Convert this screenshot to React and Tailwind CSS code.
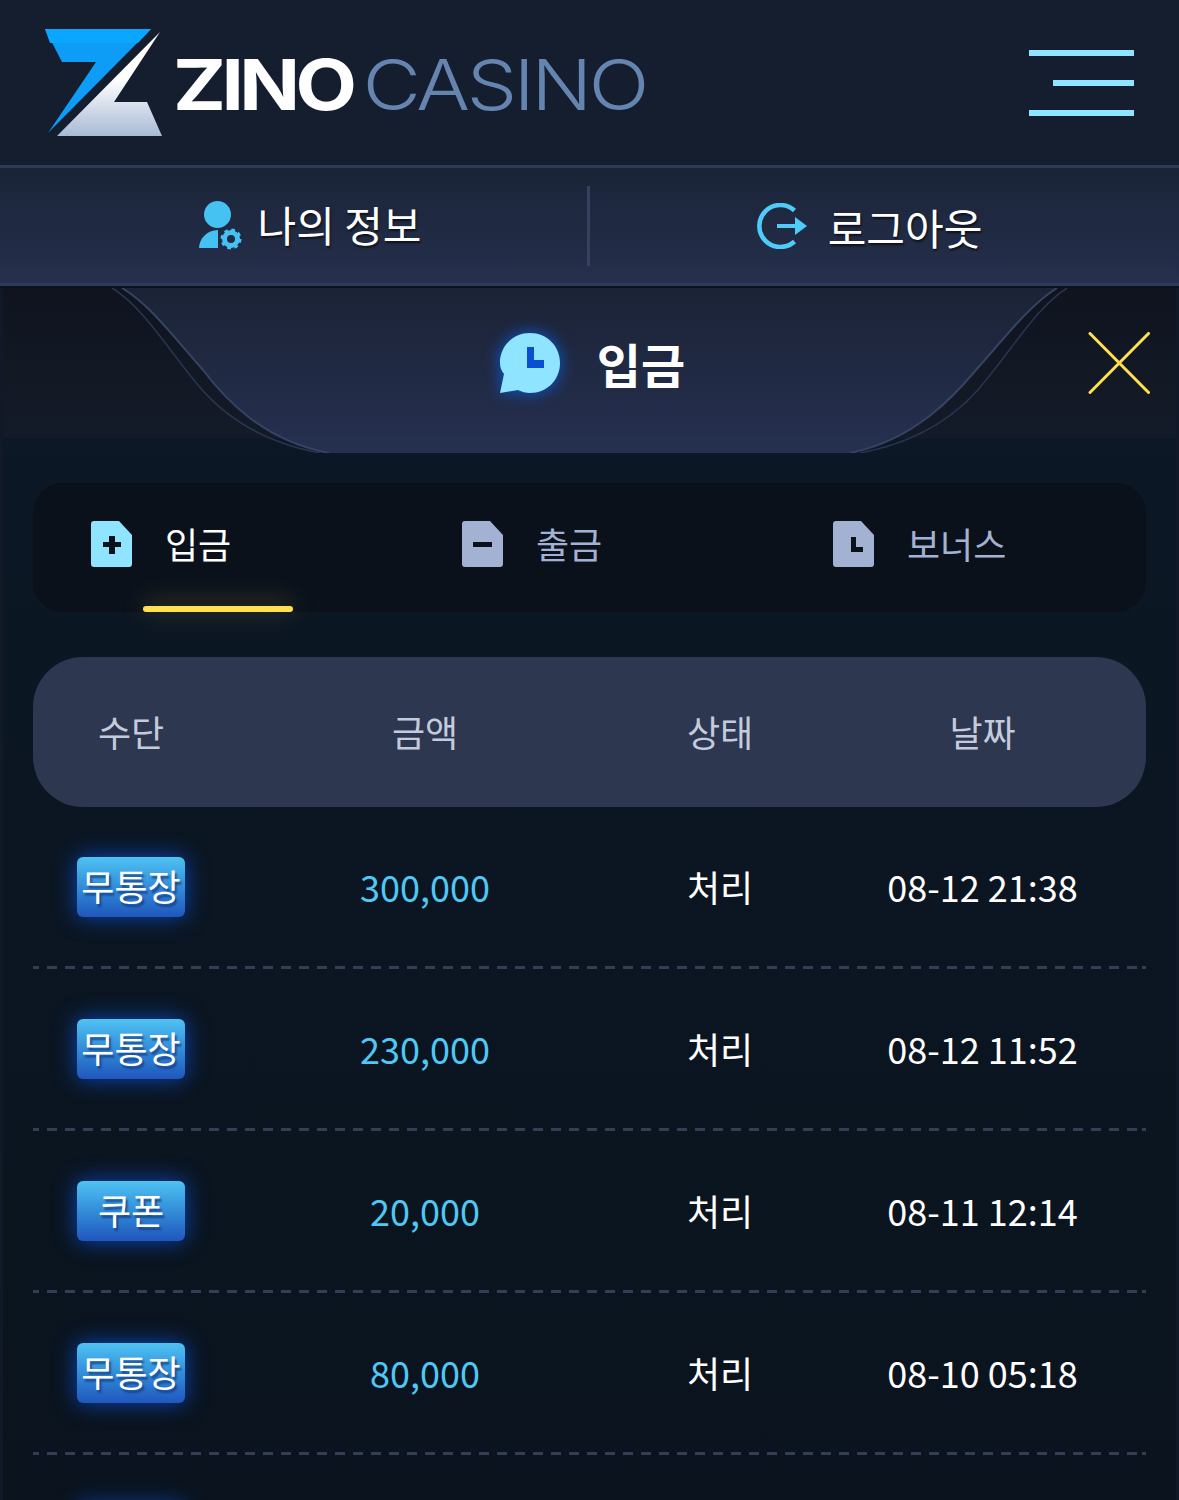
import React from "react";

const rows = [
  { kind: "무통장", amount: "300,000", state: "처리", date: "08-12 21:38" },
  { kind: "무통장", amount: "230,000", state: "처리", date: "08-12 11:52" },
  { kind: "쿠폰", amount: "20,000", state: "처리", date: "08-11 12:14" },
  { kind: "무통장", amount: "80,000", state: "처리", date: "08-10 05:18" },
];

const gridCols = "grid grid-cols-[196px_392px_198px_327px] items-center text-center";

function Logo() {
  return (
    <div className="flex items-center">
      <svg width="118" height="108" viewBox="45 29 118 108" className="shrink-0">
        <defs>
          <linearGradient id="zwhite" x1="0" y1="0" x2="0" y2="1">
            <stop offset="0.45" stopColor="#ffffff" />
            <stop offset="1" stopColor="#a8bad5" />
          </linearGradient>
        </defs>
        <polygon points="45,29 151,29 48,133 96,62 62,62" fill="#0d9cf6" />
        <polygon points="45,29 151,29 138,43 50,43" fill="#0ba6ff" />
        <polygon points="160,32 57,136 162,136 147,102 114,102" fill="url(#zwhite)" />
      </svg>
      <div className="ml-[10px] mt-[4px] flex origin-left scale-x-[1.14] items-baseline font-['Inter',sans-serif] text-[70px] leading-none tracking-[-4px]">
        <span className="font-bold text-white">ZINO</span>
        <span className="ml-[9px] font-light tracking-[-2.9px] text-[#6585b0]">CASINO</span>
      </div>
    </div>
  );
}

function Hamburger() {
  return (
    <div className="flex w-[105px] flex-col items-end gap-[24px]">
      <div className="h-[6px] w-full bg-[#8fe4ff]" />
      <div className="h-[6px] w-[81px] bg-[#8fe4ff]" />
      <div className="h-[6px] w-full bg-[#8fe4ff]" />
    </div>
  );
}

function UserIcon() {
  return (
    <svg width="43" height="49" viewBox="200 202 43 49" className="shrink-0">
      <circle cx="218.5" cy="215.5" r="13.5" fill="#45c1f2" />
      <path d="M200 249 C200 240 208 231 219 231 V249 Z" fill="#45c1f2" />
      <circle cx="232" cy="240" r="6.5" fill="none" stroke="#45c1f2" strokeWidth="5" />
      <circle cx="232" cy="240" r="9" fill="none" stroke="#45c1f2" strokeWidth="3" strokeDasharray="3.6 3.47" />
    </svg>
  );
}

function LogoutIcon() {
  return (
    <svg width="51" height="46" viewBox="757 203 51 46" className="shrink-0">
      <path d="M794.5 210.5 A21 21 0 1 0 794.5 241.5" fill="none" stroke="#4ecbf9" strokeWidth="4.5" />
      <rect x="777" y="224" width="19" height="4" fill="#4ecbf9" />
      <polygon points="795,217 807,226 795,235" fill="#4ecbf9" />
    </svg>
  );
}

function ChatClock() {
  return (
    <svg width="62" height="62" viewBox="0 0 62 62" className="shrink-0 drop-shadow-[0_0_8px_#0a5ad8]">
      <path d="M31 1 C48 1 61 14 61 31 C61 48 48 61 31 61 C27 61 23 60 19 58 L1 61 L5 42 C2 38 1 35 1 31 C1 14 14 1 31 1 Z" fill="#8fe4ff" />
      <path d="M28 15 H35 V28 H45 V36 H28 Z" fill="#0a4fd0" />
    </svg>
  );
}

function CloseIcon() {
  return (
    <svg width="62" height="62" viewBox="0 0 62 62" className="shrink-0">
      <path d="M2 1.5 L60.5 60.5 M60.5 1.5 L2 60.5" stroke="#ffe04f" strokeWidth="3" strokeLinecap="round" />
    </svg>
  );
}

function DocIcon({ color, mark }) {
  return (
    <svg width="42" height="46" viewBox="0 0 42 46" className="shrink-0">
      <path d="M3 0 H28 L41 14 V43 Q41 46 38 46 H3 Q0 46 0 43 V3 Q0 0 3 0 Z" fill={color} />
      {mark === "plus" && <path d="M18 15 H24 V21 H30 V26 H24 V33 H18 V26 H12 V21 H18 Z" fill="#0a111b" />}
      {mark === "minus" && <rect x="11" y="21" width="19" height="5" fill="#0a111b" />}
      {mark === "clock" && <path d="M18 16 H23 V26 H30 V31 H18 Z" fill="#0a111b" />}
    </svg>
  );
}

function Tab({ label, mark, active }) {
  return (
    <div className="relative flex h-full items-center gap-[32px] pl-[58px] pb-[8px]">
      <DocIcon color={active ? "#8fe4ff" : "#a3b1d3"} mark={mark} />
      <span className={active ? "mb-[2px] text-[36px] text-white" : "mb-[2px] text-[36px] text-[#a3b1d3]"}>{label}</span>
      {active && (
        <div className="absolute bottom-0 left-[110px] h-[6px] w-[150px] rounded-full bg-[#ffe04f] shadow-[0_-4px_24px_rgba(255,224,79,0.35)]" />
      )}
    </div>
  );
}

function Badge({ children }) {
  return (
    <div className="flex h-[60px] w-[108px] items-center justify-center rounded-[6px] bg-gradient-to-b from-[#4fc3f3] to-[#2156bd] pb-[3px] text-white shadow-[0_0_22px_#0a46b8] [text-shadow:2px_3px_2px_rgba(20,60,130,0.8)]">
      <span className="whitespace-nowrap">{children}</span>
    </div>
  );
}

function Divider() {
  return <div className="h-[3px] bg-[repeating-linear-gradient(90deg,#333e54_0_10px,transparent_10px_18px)] bg-[position:-4px_0]" />;
}

function Row({ row }) {
  return (
    <div>
      <div className={`${gridCols} h-[159px] text-[36px]`}>
        <div className="flex justify-center">
          <Badge>{row.kind}</Badge>
        </div>
        <div className="mb-[2px] text-[#4fc8f5]">{row.amount}</div>
        <div className="mb-[2px] text-white">{row.state}</div>
        <div className="mb-[2px] text-white">{row.date}</div>
      </div>
      <Divider />
    </div>
  );
}

export default function App() {
  return (
    <div className="h-[1500px] w-[1179px] overflow-hidden bg-[#0a131d] font-['Noto_Sans_CJK_KR','Noto_Sans',sans-serif]">
      <header className="flex h-[168px] items-center justify-between border-b-[3px] border-[#2e3b58] bg-[#151e2f] pl-[45px] pr-[45px]">
        <Logo />
        <Hamburger />
      </header>

      <nav className="flex h-[118px] items-center border-b-[3px] border-[#2e3b58] bg-gradient-to-b from-[#1a2438] to-[#262f4c] text-[42px] leading-none text-white [text-shadow:1px_2px_2px_rgba(0,0,0,0.6)]">
        <div className="flex w-[587px] items-center justify-center gap-[16px] pl-[33px]">
          <UserIcon />
          <span className="-mt-[3px]">나의 정보</span>
        </div>
        <div className="h-[80px] w-[3px] bg-[#36425d]" />
        <div className="flex flex-1 items-center justify-center gap-[20px] pr-[30px]">
          <LogoutIcon />
          <span className="mt-[2px]">로그아웃</span>
        </div>
      </nav>

      <main className="mt-[2px] border-x-[3px] border-[#111827] bg-gradient-to-b from-[#0c1826] to-[#0a131d]">
        <section className="relative h-[165px] bg-[linear-gradient(to_bottom,#0f141f_0,#141b28_150px,#0c1826_150px)]">
          <svg width="1173" height="165" viewBox="3 288 1173 165" className="absolute left-0 top-0">
            <defs>
              <linearGradient id="tabfill" x1="0" y1="0" x2="0" y2="1">
                <stop offset="0" stopColor="#1b2336" />
                <stop offset="1" stopColor="#263050" />
              </linearGradient>
            </defs>
            <path
              d="M122 288 C150 305 172 335 203 370 C222 395 260 440 329 453 H850 C915 440 955 395 976 370 C1007 335 1030 305 1057 288 Z"
              fill="url(#tabfill)"
            />
            <path d="M112 288 C140 305 162 340 190 375 C212 405 250 440 320 453" fill="none" stroke="#2a3550" strokeWidth="1.5" />
            <path d="M122 288 C150 305 172 335 203 370 C222 395 260 440 329 453" fill="none" stroke="#364362" strokeWidth="2" />
            <path d="M1067 288 C1040 305 1018 340 990 375 C968 405 930 440 860 453" fill="none" stroke="#2a3550" strokeWidth="1.5" />
            <path d="M1057 288 C1030 305 1007 335 976 370 C955 395 915 440 850 453" fill="none" stroke="#364362" strokeWidth="2" />
          </svg>
          <div className="relative grid h-[150px] grid-cols-[1fr_auto_1fr] items-center">
            <div />
            <div className="flex items-center gap-[36px] pl-[5px]">
              <ChatClock />
              <span className="text-[48px] font-bold leading-none text-white">입금</span>
            </div>
            <div className="flex justify-end pr-[26px]">
              <CloseIcon />
            </div>
          </div>
        </section>

        <div className="px-[30px] pt-[30px]">
          <div className="grid h-[129px] grid-cols-3 rounded-[30px] bg-[#0a111b]">
            <Tab label="입금" mark="plus" active />
            <Tab label="출금" mark="minus" />
            <Tab label="보너스" mark="clock" />
          </div>

          <div className={`${gridCols} mt-[45px] h-[150px] rounded-[50px] bg-[#2d3750] pb-[2px] text-[36px] text-[#c3cbdd]`}>
            <div>수단</div>
            <div>금액</div>
            <div>상태</div>
            <div>날짜</div>
          </div>

          {rows.map((row) => (
            <Row key={row.date} row={row} />
          ))}

          <div className={`${gridCols} h-[159px] text-[36px]`}>
            <div className="flex justify-center">
              <Badge />
            </div>
          </div>
        </div>
      </main>
    </div>
  );
}
